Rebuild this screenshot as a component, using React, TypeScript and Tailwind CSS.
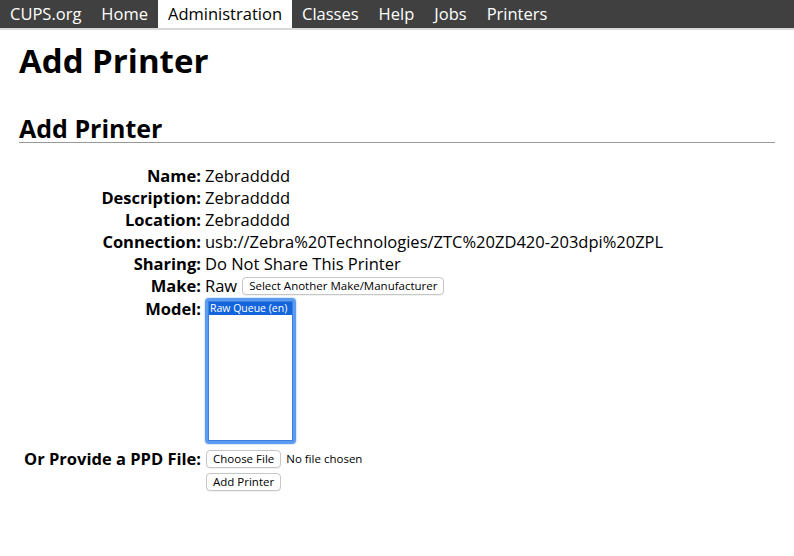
const navItems = ["CUPS.org", "Home", "Administration", "Classes", "Help", "Jobs", "Printers"];

const rows = [
  { label: "Name:", value: "Zebradddd" },
  { label: "Description:", value: "Zebradddd" },
  { label: "Location:", value: "Zebradddd" },
  { label: "Connection:", value: "usb://Zebra%20Technologies/ZTC%20ZD420-203dpi%20ZPL" },
  { label: "Sharing:", value: "Do Not Share This Printer" },
];

function SmallButton({ children }: { children: React.ReactNode }) {
  return (
    <button className="h-[18px] px-[6px] bg-white border border-[#c6c6c6] rounded-[4px] text-[11.5px] leading-none text-black whitespace-nowrap shadow-[0_1px_0_rgba(0,0,0,0.05)]">
      {children}
    </button>
  );
}

export default function App() {
  return (
    <div className="w-[794px] h-[556px] bg-white text-black font-['Open_Sans',sans-serif] overflow-hidden">
      <nav className="h-[28px] bg-[#404040] flex flex-row items-stretch border-b-2 border-[#d9d9d9] box-content">
        {navItems.map((item) => (
          <a
            key={item}
            className={
              item === "Administration"
                ? "px-[10px] flex items-center text-[16.5px] bg-white text-black"
                : "px-[10px] flex items-center text-[16.5px] text-white"
            }
          >
            {item}
          </a>
        ))}
      </nav>

      <main className="px-[19px]">
        <h1 className="mt-[12px] text-[33px] font-bold leading-[38px]">Add Printer</h1>
        <h2 className="mt-[35px] text-[25px] font-bold leading-[27px] border-b border-[#999999]">
          Add Printer
        </h2>

        <div className="mt-[22px] flex flex-col text-[16.5px]">
          {rows.map((r) => (
            <div key={r.label} className="flex flex-row h-[22px] items-center">
              <span className="w-[182px] text-right font-bold whitespace-nowrap">{r.label}</span>
              <span className="ml-[4px] whitespace-nowrap">{r.value}</span>
            </div>
          ))}
          <div className="flex flex-row h-[22px] items-center">
            <span className="w-[182px] text-right font-bold">Make:</span>
            <span className="ml-[4px]">Raw</span>
            <span className="ml-[5px] flex">
              <SmallButton>Select Another Make/Manufacturer</SmallButton>
            </span>
          </div>
          <div className="flex flex-row mt-[1px]">
            <span className="w-[182px] text-right font-bold leading-[22px]">Model:</span>
            <div className="ml-[4px] w-[91px] h-[146px] border-[3px] border-[#5b9cf0] rounded-[4px] shadow-[0_0_2px_#7fb2f5]">
              <div className="h-full border border-[#3d7fe0] bg-white">
                <div className="bg-[#1464dc] text-white text-[10.5px] leading-[13px] px-[1px] whitespace-nowrap overflow-hidden">
                  Raw Queue (en)
                </div>
              </div>
            </div>
          </div>
          <div className="flex flex-row h-[22px] items-center mt-[4px]">
            <span className="w-[182px] text-right font-bold whitespace-nowrap">Or Provide a PPD File:</span>
            <span className="ml-[5px] flex">
              <SmallButton>Choose File</SmallButton>
            </span>
            <span className="ml-[5px] text-[11.5px]">No file chosen</span>
          </div>
          <div className="flex flex-row h-[24px] items-center">
            <span className="w-[182px]" />
            <span className="ml-[5px] flex">
              <SmallButton>Add Printer</SmallButton>
            </span>
          </div>
        </div>
      </main>
    </div>
  );
}
